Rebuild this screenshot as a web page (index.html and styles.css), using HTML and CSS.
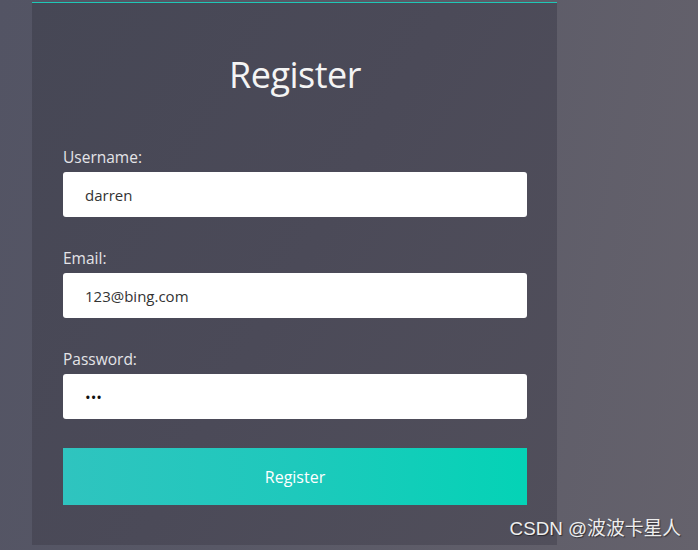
FILE: index.html
```html
<!DOCTYPE html>
<html lang="en">
<head>
    <meta charset="UTF-8">
    <meta name="viewport" content="width=device-width, initial-scale=1.0">
    <title>Register</title>
    <link rel="stylesheet" href="styles.css">
</head>
<body>
    <div class="page">
        <div class="register-box">
            <h1 class="title">Register</h1>
            <form class="register-form">
                <label for="username">Username:</label>
                <input type="text" id="username" name="username" value="darren">

                <label for="email">Email:</label>
                <input type="text" id="email" name="email" value="123@bing.com">

                <label for="password">Password:</label>
                <input type="password" id="password" name="password" value="123">

                <button type="button">Register</button>
            </form>
        </div>
    </div>
    <div class="watermark">CSDN @波波卡星人</div>
</body>
</html>
```

FILE: styles.css
```css
:root {
    --fontFamily: "Open Sans", "Noto Sans", Arial, sans-serif;
    --colorTeal: #1fc7b6;
    --colorWhite: #fff;
}

html, body {
    height: 100%;
}

body {
    margin: 0;
    font-family: var(--fontFamily);
    background: linear-gradient(100deg, #535464 0%, #585866 40%, #65626c 100%);
    overflow: hidden;
}

.page {
    padding-left: 32px;
    padding-top: 2px;
}

.register-box {
    width: 525px;
    height: 543px;
    box-sizing: border-box;
    border-top: 1px solid var(--colorTeal);
    background: linear-gradient(120deg, #464755 0%, #4b4a58 50%, #514f5b 100%);
    padding: 0 30px 0 31px;
}

.title {
    margin: 0;
    padding-top: 52px;
    height: 82px;
    text-align: center;
    font-size: 36px;
    font-weight: 400;
    line-height: 40px;
    color: #f4f4f4;
    letter-spacing: -0.5px;
}

.register-form {
    display: flex;
    flex-direction: column;
    padding-top: 10px;
}

.register-form label {
    font-size: 15.5px;
    line-height: 20px;
    color: #e4e4e8;
    margin-bottom: 5px;
}

.register-form input {
    height: 45px;
    box-sizing: border-box;
    border: none;
    border-radius: 3px;
    padding: 0 22px;
    font-family: var(--fontFamily);
    font-size: 15px;
    color: #333;
    background: var(--colorWhite);
    margin-bottom: 31px;
}

.register-form input[type="password"] {
    margin-bottom: 29px;
    font-size: 15px;
    color: #111;
}

.register-form button {
    height: 57px;
    border: none;
    font-family: var(--fontFamily);
    font-size: 16px;
    color: var(--colorWhite);
    background: linear-gradient(90deg, #2fc4bf 0%, #1ec9bc 50%, #04d3b6 100%);
    cursor: pointer;
}

.watermark {
    position: absolute;
    right: 17px;
    bottom: 10px;
    font-family: "Liberation Sans", "Noto Sans CJK SC", sans-serif;
    font-size: 18.8px;
    color: #eeeeee;
    text-shadow: 1px 1px 1px rgba(0, 0, 0, 0.5);
}
```
